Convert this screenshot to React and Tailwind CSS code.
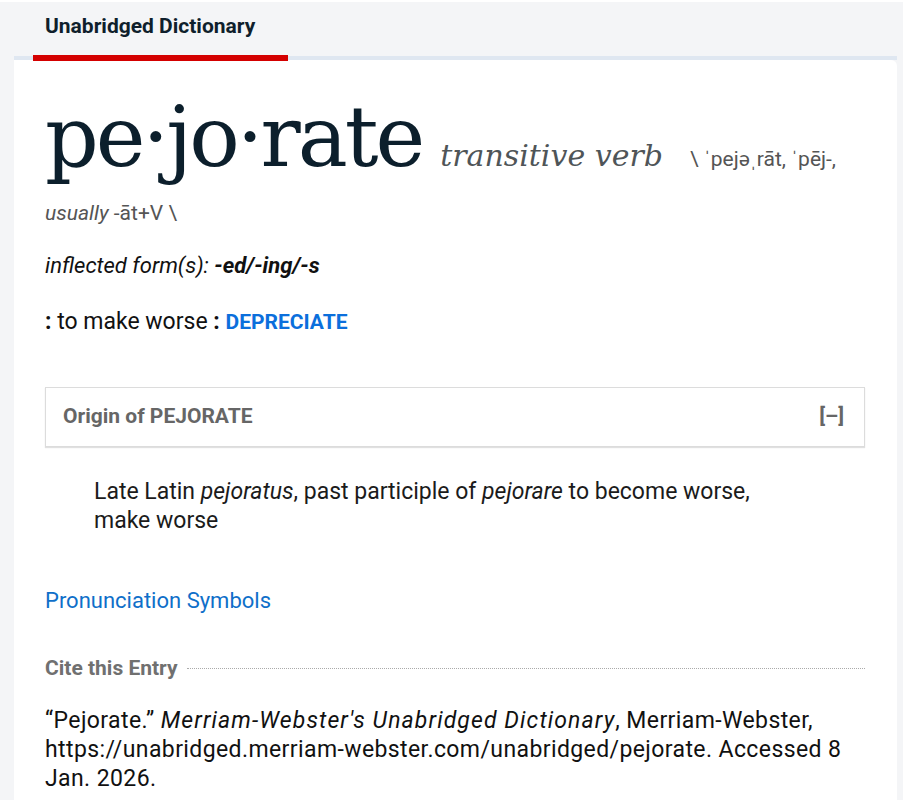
export default function App() {
  return (
    <div className="min-h-screen border-t-2 border-white bg-[#f4f5f7] font-['Roboto',sans-serif] text-[#1b1b1b]">
      <div className="ml-[14px] mr-[6px] border-b-4 border-[#dfe7f1]">
        <div className="relative -mb-[5px] ml-[19px] w-[255px] border-b-[6px] border-[#d40000] pb-[17px] pl-[12px] pt-[12px]">
          <span className="block text-[21px] font-bold leading-[24px] text-[#0f1f2c]">Unabridged Dictionary</span>
        </div>
      </div>
      <div className="ml-[14px] mr-[6px] rounded-tr-[6px] bg-white pb-20 pl-[31px] pr-[32px] pt-[27px]">
        <p className="text-[21px] leading-[52px] text-[#555]">
          <span className="font-['DejaVu_Serif',serif] text-[84px] leading-[100px] tracking-[-3px] text-[#0c1f2c]">pe·jo·rate</span>
          <span className="ml-[18px] font-['DejaVu_Serif',serif] text-[30px] italic text-[#4f5558]">transitive verb</span>
          <span className="ml-[27px]">\ ˈpejəˌrāt, ˈpēj-, <em>usually</em> -āt+V \</span>
        </p>
        <p className="mt-[12px] text-[22px] leading-[30px] text-[#111]">
          <em>inflected form(s):</em> <strong className="italic">-ed/-ing/-s</strong>
        </p>
        <p className="mt-[26px] text-[23px] leading-[30px] text-[#111]">
          <strong>:</strong> to make worse <strong>:</strong>{' '}
          <a className="text-[21px] font-bold uppercase text-[#0b6fdc]">depreciate</a>
        </p>
        <div className="mt-[50px] flex h-[60px] items-center justify-between border border-[#dcdcdc] pl-[17px] pr-[20px] shadow-[0_1px_1px_rgba(0,0,0,0.12)]">
          <span className="text-[21px] font-bold text-[#666]">Origin of PEJORATE</span>
          <span className="text-[21px] font-bold text-[#666]">[–]</span>
        </div>
        <p className="ml-[49px] mt-[30px] w-[700px] text-[23px] leading-[29px] text-[#1b1b1b]">
          Late Latin <em>pejoratus</em>, past participle of <em>pejorare</em> to become worse, make worse
        </p>
        <a className="mt-[51px] block text-[22px] leading-[30px] text-[#0f6fc9]">Pronunciation Symbols</a>
        <div className="mt-[37px] flex items-center">
          <span className="text-[21px] font-bold text-[#707070]">Cite this Entry</span>
          <span className="ml-[9px] flex-1 border-t border-dotted border-[#aaa]"></span>
        </div>
        <p className="mt-[21px] text-[23px] leading-[29px] tracking-[0.4px] text-[#111]">
          “Pejorate.” <em className="tracking-[1.1px]">Merriam-Webster's Unabridged Dictionary</em>, Merriam-Webster,
          https://unabridged.merriam-webster.com/unabridged/pejorate. Accessed 8 Jan. 2026.
        </p>
      </div>
    </div>
  );
}
